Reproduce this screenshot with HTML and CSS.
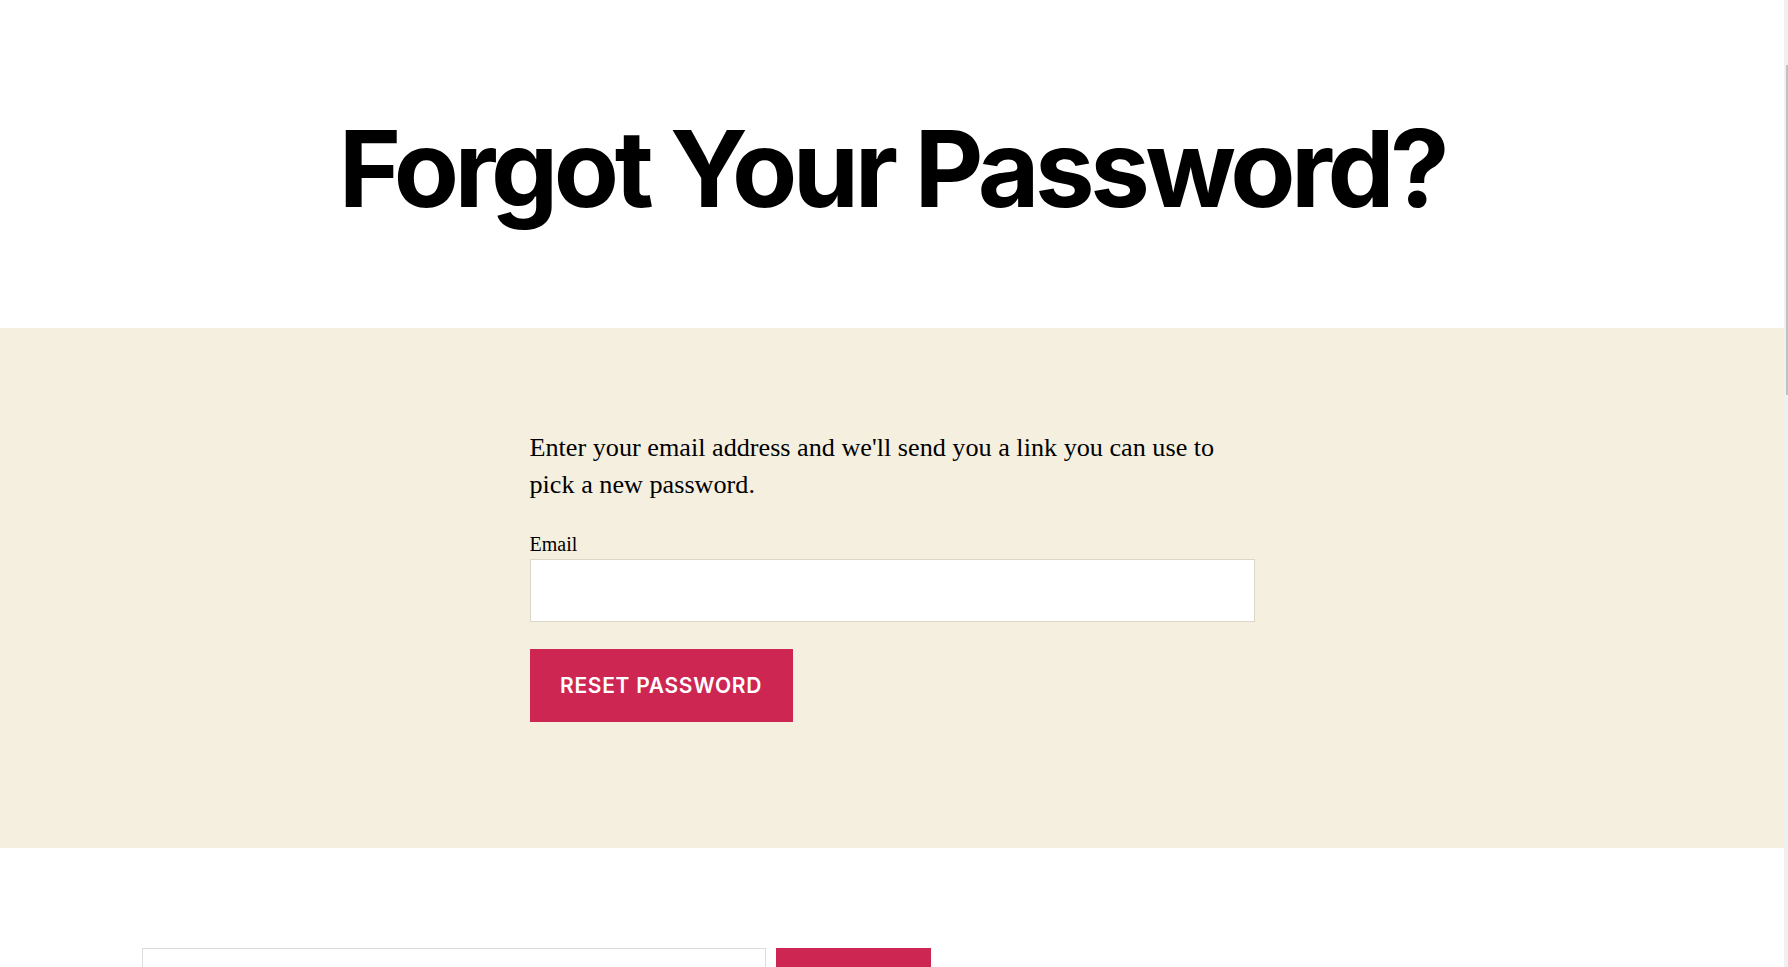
FILE: index.html
```html
<!DOCTYPE html>
<html lang="en">
<head>
    <meta charset="UTF-8">
    <meta name="viewport" content="width=device-width, initial-scale=1.0">
    <title>Forgot Your Password?</title>
    <link rel="stylesheet" href="styles.css">
</head>
<body>
    <header class="entry-header">
        <h1 class="entry-title">Forgot Your Password?</h1>
    </header>

    <section class="entry-content">
        <div class="section-inner">
            <p class="intro">Enter your email address and we'll send you a link you can use to pick a new password.</p>
            <form class="lostpassword-form" id="lostPasswordForm">
                <label for="userLogin">Email</label>
                <input type="text" id="userLogin" name="user_login" autocomplete="email">
                <button type="submit" class="btn">Reset Password</button>
            </form>
        </div>
    </section>

    <footer class="footer-widgets">
        <form class="search-form" role="search">
            <input type="search" class="search-field" name="s">
            <button type="submit" class="btn search-submit">Search</button>
        </form>
    </footer>

    <!-- thin page scrollbar -->
    <div class="scrollbar"><div class="scrollbar-thumb"></div></div>
</body>
</html>
```

FILE: styles.css
```css
:root {
    --accent: #cd2653;
    --beige: #f5efe0;
    --border: #dcd7ca;
    --text: #000;
    --serif: 'Liberation Serif', 'Times New Roman', serif;
    --sans: 'Inter', 'Noto Sans', sans-serif;
}

* {
    margin: 0;
    padding: 0;
    box-sizing: border-box;
}

body {
    background: #fff;
    color: var(--text);
    font-family: var(--serif);
    margin-right: 4px;
}

/* page title */
.entry-header {
    height: 328px;
    padding-top: 108px;
    text-align: center;
}

.entry-title {
    font-family: var(--sans);
    font-size: 106.5px;
    font-weight: 700;
    line-height: 1.138;
    letter-spacing: -0.0415em;
}

/* beige content band */
.entry-content {
    background: var(--beige);
    padding: 101px 0 126px;
}

.section-inner {
    width: 725px;
    margin: 0 auto;
}

.intro {
    font-size: 26.2px;
    line-height: 37.3px;
    margin-bottom: 28.7px;
}

.lostpassword-form label {
    display: block;
    font-size: 20px;
    line-height: 1.2;
    margin-bottom: 3px;
}

.lostpassword-form input {
    display: block;
    width: 100%;
    height: 63px;
    background: #fff;
    border: 1px solid var(--border);
    border-radius: 0;
    font-family: var(--sans);
    font-size: 19px;
    padding: 0 21px;
}

.lostpassword-form .btn {
    margin-top: 27px;
}

.btn {
    display: inline-block;
    background: var(--accent);
    color: #fff;
    border: none;
    border-radius: 0;
    font-family: var(--sans);
    font-size: 21px;
    font-weight: 600;
    line-height: 1.25;
    letter-spacing: 0.0333em;
    text-transform: uppercase;
    padding: 23.4px 30.5px;
    cursor: pointer;
}

/* footer search */
.footer-widgets {
    min-height: 1986px;
    padding: 100px 142px 0;
}

.search-form {
    display: flex;
    gap: 10px;
}

.search-field {
    width: 624px;
    height: 73px;
    border: 1px solid #dcdcdc;
    border-radius: 0;
    background: #fff;
}

.search-submit {
    width: 155px;
}

.scrollbar {
    position: fixed;
    top: 0;
    right: 0;
    width: 4px;
    height: 100%;
    background: #f0f0f0;
}

.scrollbar-thumb {
    margin: 65px 0 0 2px;
    width: 2px;
    height: 330px;
    background: #c1c1c1;
}
```
